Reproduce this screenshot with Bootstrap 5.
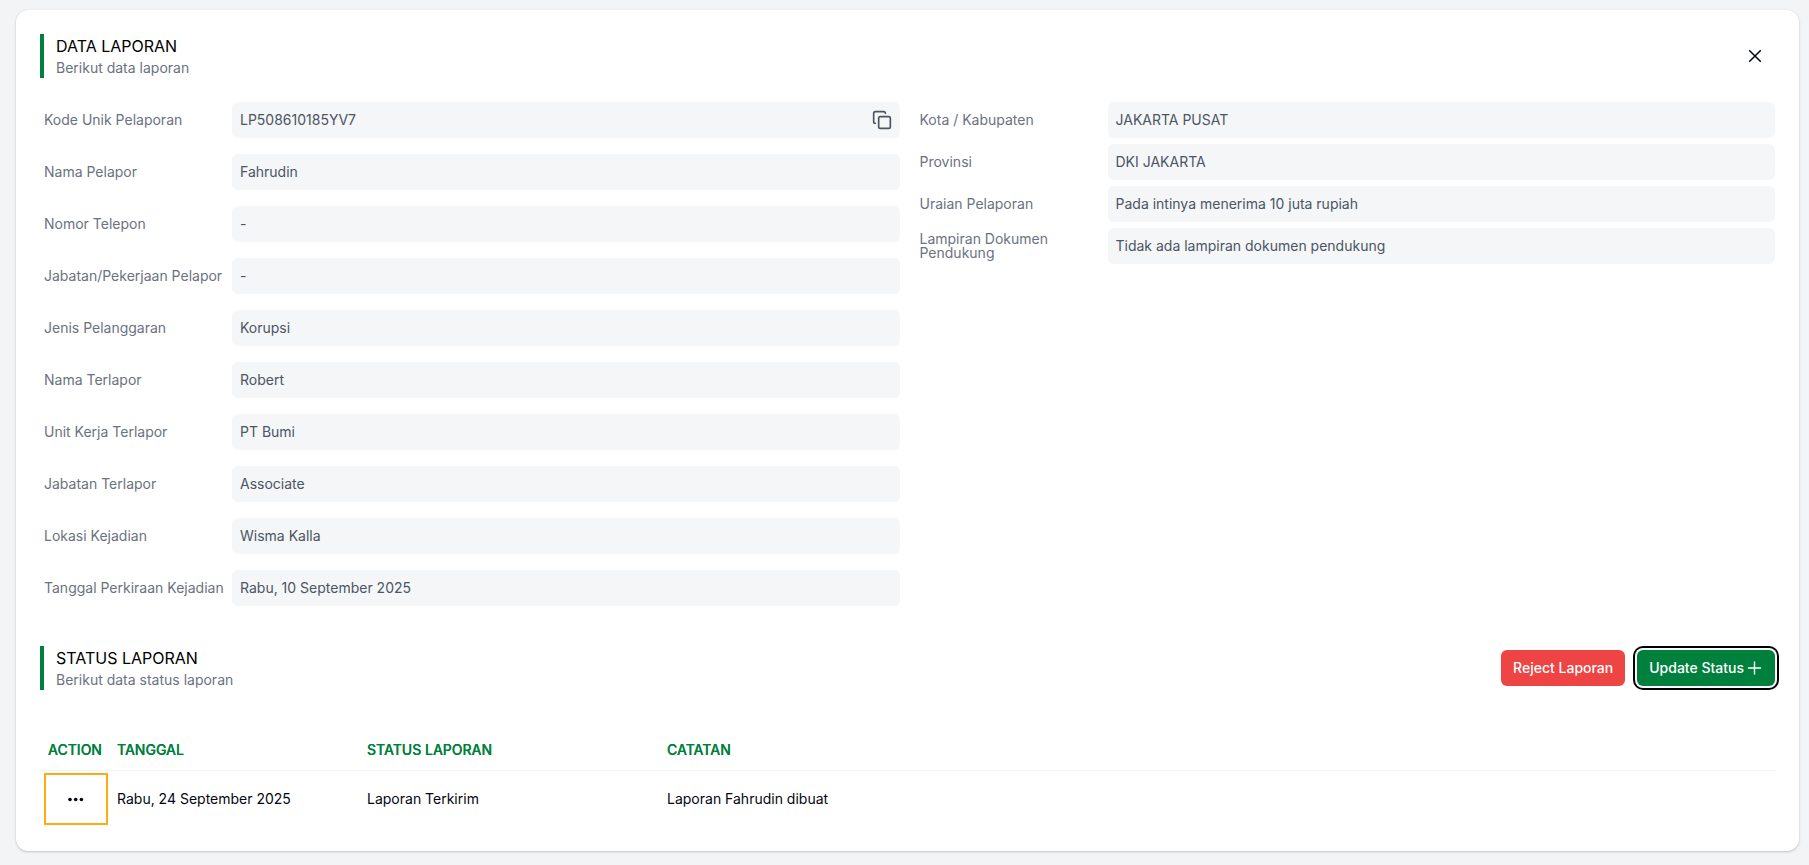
<!DOCTYPE html>
<html lang="id">
<head>
<meta charset="utf-8">
<meta name="viewport" content="width=device-width, initial-scale=1">
<title>Data Laporan</title>
<link href="https://cdn.jsdelivr.net/npm/bootstrap@5.3.0/dist/css/bootstrap.min.css" rel="stylesheet">
<script defer src="https://cdn.jsdelivr.net/npm/bootstrap@5.3.0/dist/js/bootstrap.bundle.min.js"></script>
<style>
  body { font-family: Inter, "Liberation Sans", sans-serif; font-size: 14px; line-height: 20px; color: #030712; background: #f3f4f6; padding: 10px 10px 14px 16px; }
  .panel { background: #fff; border-radius: 12px; padding: 24px; box-shadow: 0 1px 3px rgba(0,0,0,.1), 0 1px 2px rgba(0,0,0,.1), 0 0 1px rgba(0,0,0,.12); }
  .heading { border-left: 4px solid #00803d; padding-left: 12px; }
  .heading h2 { font-size: 16px; line-height: 24px; font-weight: 400; margin: 0; color: #000; }
  .heading p { margin: 0; color: #6b7280; }
  .icon-btn { border: 0; background: none; padding: 0; color: inherit; display: flex; align-items: center; justify-content: center; }
  .close-btn { width: 40px; height: 40px; }
  .fields-wide { gap: 16px; }
  .fields-tight { gap: 6px; }
  .field-label { flex: 0 0 192px; padding: 0 4px; line-height: 14px; color: #6b7280; }
  .field-label.wraps { padding-right: 48px; }
  .value-box { height: 36px; background: #f4f6f8; border-radius: 6px; padding: 0 8px; color: #4b5563; min-width: 0; }
  .value-box input { display: block; border: 0; background: none; outline: 0; padding: 0 0 2px; color: #4b5563; width: 100%; height: 36px; min-width: 0; }
  .actions { gap: 12px; }
  .action-btn { height: 36px; padding: 0 12px; border: 0; border-radius: 6px; font-size: 14px; line-height: 20px; font-weight: 500; color: #fff; gap: 3px; }
  .reject { background: #ef4444; }
  .update { background: #00803d; box-shadow: 0 0 0 2px #fff, 0 0 0 4px #000; }
  .status-table { table-layout: fixed; margin: 0; color: #030712; }
  .status-table th { height: 40px; padding: 0 8px; vertical-align: middle; color: #00803d; font-weight: 500; text-shadow: 0 0 0 #00803d; border-bottom: 1px solid #f3f4f6; white-space: nowrap; }
  .status-table td { height: 57px; padding: 0 8px; vertical-align: middle; border: 0; }
  .status-table td:first-child { padding: 0 1px 0 4px; }
  .col-action { width: 69px; }
  .col-date { width: 250px; }
  .col-status { width: 300px; }
  .menu-btn { width: 100%; height: 52px; border: 2px solid #ffab0f; }
</style>
</head>
<body>
<main class="panel">
  <header class="d-flex justify-content-between align-items-center mb-4">
    <div class="heading"><h2>DATA LAPORAN</h2><p>Berikut data laporan</p></div>
    <button class="icon-btn close-btn" type="button" aria-label="Tutup">
      <svg width="20" height="20" viewBox="0 0 20 20" fill="none" stroke="currentColor" stroke-width="1.500"><path d="M4.200 4.200l11.600 11.600M15.800 4.200l-11.600 11.600"/></svg>
    </button>
  </header>

  <div class="row gx-3">
    <div class="col-12 col-lg-6 d-flex flex-column fields-wide">
      <div class="d-flex align-items-center"><label class="field-label" for="kode">Kode Unik Pelaporan</label><div class="value-box flex-fill d-flex align-items-center"><input id="kode" readonly value="LP508610185YV7"><button class="icon-btn" type="button" aria-label="Salin kode"><svg width="20" height="20" viewBox="0 0 24 24" fill="none" stroke="currentColor" stroke-width="2" stroke-linecap="round" stroke-linejoin="round"><rect x="8" y="8" width="14" height="14" rx="2"/><path d="M4 16c-1.100 0-2-.9-2-2V4c0-1.100.9-2 2-2h10c1.100 0 2 .9 2 2"/></svg></button></div></div>
      <div class="d-flex align-items-center"><label class="field-label" for="pelapor">Nama Pelapor</label><div class="value-box flex-fill"><input id="pelapor" readonly value="Fahrudin"></div></div>
      <div class="d-flex align-items-center"><label class="field-label" for="telepon">Nomor Telepon</label><div class="value-box flex-fill"><input id="telepon" readonly value="-"></div></div>
      <div class="d-flex align-items-center"><label class="field-label" for="pekerjaan">Jabatan/Pekerjaan Pelapor</label><div class="value-box flex-fill"><input id="pekerjaan" readonly value="-"></div></div>
      <div class="d-flex align-items-center"><label class="field-label" for="jenis">Jenis Pelanggaran</label><div class="value-box flex-fill"><input id="jenis" readonly value="Korupsi"></div></div>
      <div class="d-flex align-items-center"><label class="field-label" for="terlapor">Nama Terlapor</label><div class="value-box flex-fill"><input id="terlapor" readonly value="Robert"></div></div>
      <div class="d-flex align-items-center"><label class="field-label" for="unit">Unit Kerja Terlapor</label><div class="value-box flex-fill"><input id="unit" readonly value="PT Bumi"></div></div>
      <div class="d-flex align-items-center"><label class="field-label" for="jabatan">Jabatan Terlapor</label><div class="value-box flex-fill"><input id="jabatan" readonly value="Associate"></div></div>
      <div class="d-flex align-items-center"><label class="field-label" for="lokasi">Lokasi Kejadian</label><div class="value-box flex-fill"><input id="lokasi" readonly value="Wisma Kalla"></div></div>
      <div class="d-flex align-items-center"><label class="field-label" for="tanggal">Tanggal Perkiraan Kejadian</label><div class="value-box flex-fill"><input id="tanggal" readonly value="Rabu, 10 September 2025"></div></div>
    </div>
    <div class="col-12 col-lg-6 d-flex flex-column fields-tight">
      <div class="d-flex align-items-center"><label class="field-label" for="kota">Kota / Kabupaten</label><div class="value-box flex-fill"><input id="kota" readonly value="JAKARTA PUSAT"></div></div>
      <div class="d-flex align-items-center"><label class="field-label" for="provinsi">Provinsi</label><div class="value-box flex-fill"><input id="provinsi" readonly value="DKI JAKARTA"></div></div>
      <div class="d-flex align-items-center"><label class="field-label" for="uraian">Uraian Pelaporan</label><div class="value-box flex-fill"><input id="uraian" readonly value="Pada intinya menerima 10 juta rupiah"></div></div>
      <div class="d-flex align-items-center"><label class="field-label wraps" for="lampiran">Lampiran Dokumen Pendukung</label><div class="value-box flex-fill"><input id="lampiran" readonly value="Tidak ada lampiran dokumen pendukung"></div></div>
    </div>
  </div>

  <section class="pt-3 mt-4">
    <div class="d-flex justify-content-between align-items-center pb-3 mb-4">
      <div class="heading"><h2>STATUS LAPORAN</h2><p>Berikut data status laporan</p></div>
      <div class="d-flex actions">
        <button class="btn action-btn reject" type="button">Reject Laporan</button>
        <button class="btn action-btn update d-flex align-items-center" type="button">Update Status
          <svg width="16" height="16" viewBox="0 0 16 16" fill="none" stroke="currentColor" stroke-width="1.400" stroke-linecap="round"><path d="M1.500 8h12M7.500 2v12"/></svg>
        </button>
      </div>
    </div>
    <table class="table status-table">
      <colgroup><col class="col-action"><col class="col-date"><col class="col-status"><col></colgroup>
      <thead><tr><th class="text-center">ACTION</th><th>TANGGAL</th><th>STATUS LAPORAN</th><th>CATATAN</th></tr></thead>
      <tbody><tr>
        <td><button class="icon-btn menu-btn" type="button" aria-label="Menu aksi"><svg width="16" height="16" viewBox="0 0 16 16" fill="currentColor"><circle cx="2" cy="8.500" r="1.800"/><circle cx="7.700" cy="8.500" r="1.800"/><circle cx="13.400" cy="8.500" r="1.800"/></svg></button></td>
        <td>Rabu, 24 September 2025</td><td>Laporan Terkirim</td><td>Laporan Fahrudin dibuat</td>
      </tr></tbody>
    </table>
  </section>
</main>
</body>
</html>
